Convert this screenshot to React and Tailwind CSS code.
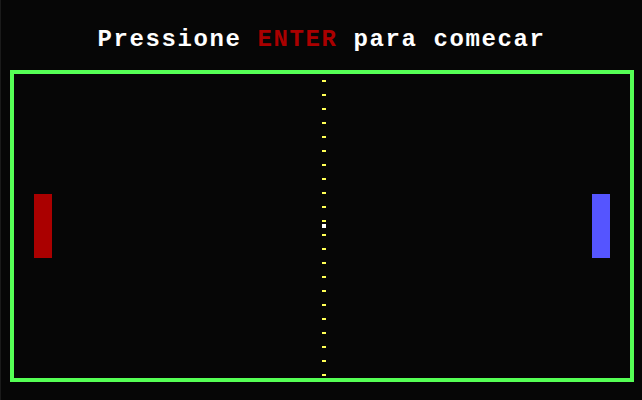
import React from 'react';

// Pong start screen — static court, paddles, ball and prompt
const DASHES = Array.from({ length: 22 }, (_, i) => i);

export default function App() {
  return (
    <div className="w-[642px] h-[400px] bg-[#060606] border-l border-[#1a1a1a] overflow-hidden">
      <div
        className="h-[70px] pt-[28px] text-center text-[24px] leading-[24px] font-bold tracking-[1.6px] text-white whitespace-pre"
        style={{ fontFamily: '"Liberation Mono", "DejaVu Sans Mono", monospace' }}
      >
        Pressione <span className="text-[#aa0000]">ENTER</span> para comecar
      </div>

      <div className="relative ml-[9px] w-[624px] h-[312px] border-4 border-[#55ff55]">
        {/* net */}
        {DASHES.map(i => (
          <div
            key={i}
            className="absolute left-[308px] w-[4px] h-[2px] bg-[#ffff55]"
            style={{ top: 6 + i * 14 }}
          />
        ))}

        {/* ball */}
        <div className="absolute left-[308px] top-[150px] w-[4px] h-[4px] bg-white" />

        {/* paddles */}
        <div className="absolute left-[20px] top-[120px] w-[18px] h-[64px] bg-[#aa0000]" />
        <div className="absolute left-[578px] top-[120px] w-[18px] h-[64px] bg-[#5555ff]" />
      </div>
    </div>
  );
}
